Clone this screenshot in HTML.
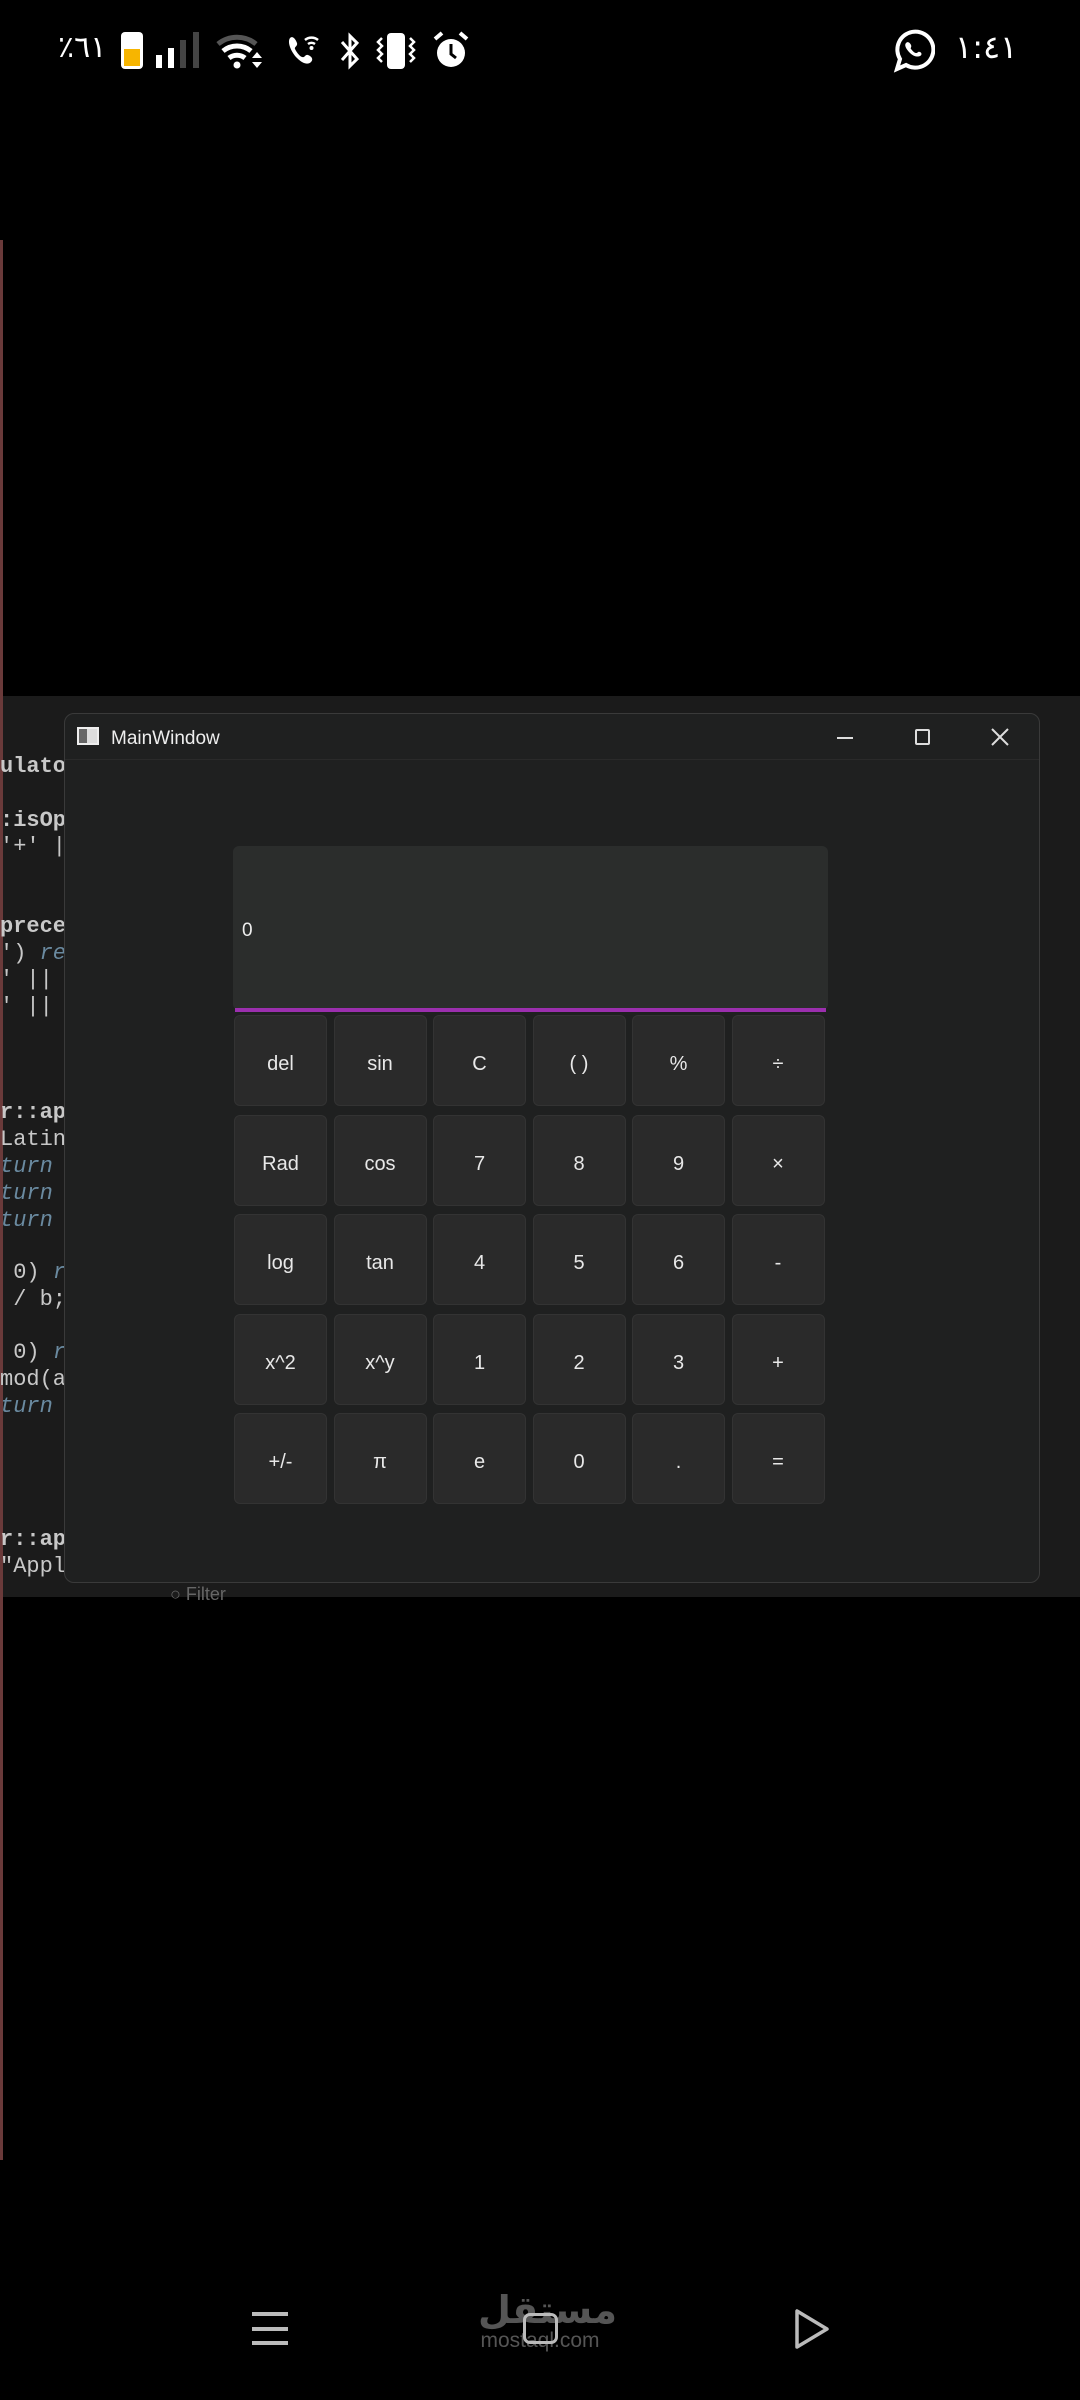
<!DOCTYPE html>
<html><head><meta charset="utf-8"><style>
*{margin:0;padding:0;box-sizing:border-box}
body{width:1080px;height:2400px;background:#000;position:relative;overflow:hidden;font-family:"Liberation Sans","DejaVu Sans",sans-serif;color:#fff}
.abs{position:absolute}
.panel{left:0;top:696px;width:1080px;height:901px;background:#1b1b1b}
.code{font-family:"Liberation Mono",monospace;font-size:22px;color:#c8c8c8;left:0;white-space:pre}
.win{left:64px;top:713px;width:976px;height:870px;background:#1f2020;border:1px solid #3a3a3a;border-radius:10px}
.title{left:0;top:0;width:100%;height:46px;border-bottom:1px solid #2a2a2a}
.disp{left:233px;top:846px;width:595px;height:164px;background:#2b2d2c;border-radius:6px}
.line{left:235px;top:1008px;width:591px;height:4px;background:#9b2fae}
.btn{width:93px;height:91px;background:#2a2a2a;border:1px solid #333;border-radius:6px;display:flex;align-items:center;justify-content:center;font-size:20px;color:#e8e8e8;padding-top:8px}
</style></head><body>
<!-- status bar -->
<div class="abs" style="left:58px;top:30px;font-size:30px;font-family:'DejaVu Sans',sans-serif">٪٦١</div>
<div class="abs" style="left:121px;top:32px;width:22px;height:37px;border-radius:4px;background:#fff"></div>
<div class="abs" style="left:124px;top:49px;width:16px;height:17px;background:#f7b500"></div>
<div class="abs" style="left:156px;top:55px;width:6px;height:13px;background:#fff"></div>
<div class="abs" style="left:168px;top:48px;width:6px;height:20px;background:#fff"></div>
<div class="abs" style="left:180px;top:40px;width:6px;height:28px;background:#444"></div>
<div class="abs" style="left:193px;top:32px;width:6px;height:36px;background:#444"></div>
<svg class="abs" style="left:215px;top:30px" width="50" height="40" viewBox="0 0 50 40"><path d="M3 14a30 30 0 0 1 38 0" stroke="#555" stroke-width="5" fill="none"/><path d="M8 21a22 22 0 0 1 28 0" stroke="#fff" stroke-width="5" fill="none"/><path d="M14 28a13 13 0 0 1 16 0" stroke="#fff" stroke-width="5" fill="none"/><circle cx="22" cy="35" r="3.5" fill="#fff"/><path d="M37 28l5-6 5 6zM37 32l5 6 5-6z" fill="#fff"/></svg>
<svg class="abs" style="left:285px;top:32px" width="36" height="36" viewBox="0 0 36 36"><path d="M5 6c3-3 6 2 7 5s-3 4-2 6 4 7 7 8 3-3 6-2 6 4 3 7-8 2-14-4-10-16-7-20z" fill="#fff"/><path d="M20 8a10 10 0 0 1 13 0M23 12a6 6 0 0 1 7 0" stroke="#fff" stroke-width="2.5" fill="none"/><circle cx="26.5" cy="16" r="2" fill="#fff"/></svg>
<svg class="abs" style="left:338px;top:31px" width="24" height="40" viewBox="0 0 24 40"><path d="M4 11l15 17-7 7V5l7 7-15 17" stroke="#fff" stroke-width="3" fill="none"/></svg>
<svg class="abs" style="left:374px;top:32px" width="44" height="38" viewBox="0 0 44 38"><rect x="13" y="1" width="18" height="36" rx="4" fill="#fff"/><path d="M8 6l-4 4 4 4-4 4 4 4-4 4 4 4M36 6l4 4-4 4 4 4-4 4 4 4-4 4" stroke="#fff" stroke-width="2.5" fill="none"/></svg>
<svg class="abs" style="left:432px;top:30px" width="38" height="40" viewBox="0 0 38 40"><circle cx="19" cy="23" r="14" fill="#fff"/><path d="M19 14v10l5 4" stroke="#000" stroke-width="3" fill="none"/><path d="M3 9l7-6M35 9l-7-6" stroke="#fff" stroke-width="4"/></svg>
<svg class="abs" style="left:891px;top:29px" width="44" height="44" viewBox="0 0 44 44"><path d="M6 40l3-10a18 18 0 1 1 6 6z" stroke="#fff" stroke-width="4" fill="none"/><path d="M15 14c2-2 4 0 5 2s-1 3 0 4 3 4 5 4 2-2 4-1 2 3 0 4-6 1-10-3-6-8-4-10z" fill="#fff"/></svg>
<div class="abs" style="left:955px;top:28px;font-size:32px;font-family:'DejaVu Sans',sans-serif">١:٤١</div>

<!-- video panel -->
<div class="abs panel"></div>
<div class="abs" style="left:0;top:240px;width:3px;height:1920px;background:#6a3a3a"></div>
<div class="abs code" style="top:754px;font-weight:bold">ulato</div>
<div class="abs code" style="top:808px;font-weight:bold">:isOp</div>
<div class="abs code" style="top:834px">'+' |</div>
<div class="abs code" style="top:914px;font-weight:bold">prece</div>
<div class="abs code" style="top:941px">') <i style="color:#6a8aa0">re</i></div>
<div class="abs code" style="top:967px">' ||</div>
<div class="abs code" style="top:994px">' ||</div>
<div class="abs code" style="top:1100px;font-weight:bold">r::ap</div>
<div class="abs code" style="top:1127px">Latin</div>
<div class="abs code" style="top:1154px;color:#6a8aa0"><i>turn</i></div>
<div class="abs code" style="top:1181px;color:#6a8aa0"><i>turn</i></div>
<div class="abs code" style="top:1208px;color:#6a8aa0"><i>turn</i></div>
<div class="abs code" style="top:1260px"> 0) <i style="color:#6a8aa0">r</i></div>
<div class="abs code" style="top:1287px"> / b;</div>
<div class="abs code" style="top:1340px"> 0) <i style="color:#6a8aa0">r</i></div>
<div class="abs code" style="top:1367px">mod(a</div>
<div class="abs code" style="top:1394px;color:#6a8aa0"><i>turn</i></div>
<div class="abs code" style="top:1527px;font-weight:bold">r::ap</div>
<div class="abs code" style="top:1554px">"Appl</div>
<div class="abs" style="left:170px;top:1584px;font-size:18px;color:#666">&#9675; Filter</div>

<div class="abs win">
 <div class="abs title">
  <div class="abs" style="left:12px;top:13px;width:22px;height:18px;background:#ddd;border:2px solid #eee"></div>
  <div class="abs" style="left:14px;top:15px;width:8px;height:14px;background:#666"></div>
  <div class="abs" style="left:46px;top:14px;font-size:19px;color:#eee">MainWindow</div>
  <div class="abs" style="left:772px;top:23px;width:16px;height:2px;background:#ddd"></div>
  <div class="abs" style="left:850px;top:15px;width:15px;height:16px;border:2px solid #ddd;border-radius:2px"></div>
  <svg class="abs" style="left:926px;top:14px" width="18" height="18"><path d="M1 1l16 16M17 1L1 17" stroke="#ddd" stroke-width="2"/></svg>
 </div>
</div>
<div class="abs disp"><div class="abs" style="left:9px;top:74px;font-size:19px;color:#eee">0</div></div>
<div class="abs line"></div>

<div id="g"></div>
<script>
var L=[["del","sin","C","( )","%","÷"],["Rad","cos","7","8","9","×"],["log","tan","4","5","6","-"],["x^2","x^y","1","2","3","+"],["+/-","π","e","0",".","="]];
var h="";for(var r=0;r<5;r++)for(var c=0;c<6;c++)h+='<div class="abs btn" style="left:'+(234+c*99.5)+'px;top:'+(1015+r*99.5)+'px">'+L[r][c]+'</div>';
document.getElementById("g").innerHTML=h;
</script>

<!-- nav -->
<div class="abs" style="left:478px;top:2288px;width:128px;text-align:center;font-size:38px;font-weight:bold;color:#555;font-family:'DejaVu Sans',sans-serif;letter-spacing:-2px">مستقل</div>
<div class="abs" style="left:475px;top:2329px;width:130px;text-align:center;font-size:21px;color:#555">mostaql.com</div>
<div class="abs" style="left:252px;top:2312px;width:36px;height:4px;background:#bbb"></div>
<div class="abs" style="left:252px;top:2327px;width:36px;height:4px;background:#bbb"></div>
<div class="abs" style="left:252px;top:2341px;width:36px;height:4px;background:#bbb"></div>
<div class="abs" style="left:523px;top:2313px;width:35px;height:31px;border:3px solid #bbb;border-radius:7px"></div>
<svg class="abs" style="left:792px;top:2307px" width="40" height="44"><path d="M5 4v36l30-18z" stroke="#bbb" stroke-width="3.5" fill="none" stroke-linejoin="round"/></svg>
</body></html>
